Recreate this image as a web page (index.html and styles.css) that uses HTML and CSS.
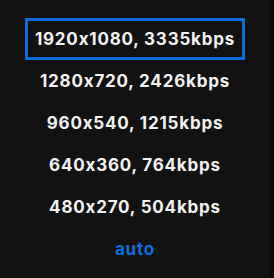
FILE: index.html
```html
<!DOCTYPE html>
<html>
<head>
<meta charset="utf-8">
<link rel="stylesheet" href="styles.css">
</head>
<body>
<div class="panel">
  <ul class="menu">
    <li class="item selected"><span class="label">1920x1080, 3335kbps</span></li>
    <li class="item"><span class="label">1280x720, 2426kbps</span></li>
    <li class="item"><span class="label">960x540, 1215kbps</span></li>
    <li class="item"><span class="label">640x360, 764kbps</span></li>
    <li class="item"><span class="label">480x270, 504kbps</span></li>
    <li class="item auto"><span class="label">auto</span></li>
  </ul>
</div>
</body>
</html>
```
FILE: styles.css
```css
html, body {
  margin: 0;
  padding: 0;
  background: #0a0a0a;
  height: 100%;
}
.panel {
  width: 270px;
  height: 278px;
  background: #121212;
  box-sizing: border-box;
  padding-top: 18px;
}
.menu {
  list-style: none;
  margin: 0;
  padding: 0;
  display: flex;
  flex-direction: column;
  align-items: center;
}
.item {
  height: 42px;
  display: flex;
  align-items: center;
  justify-content: center;
  font-family: Inter, "Liberation Sans", sans-serif;
  font-weight: 700;
  font-size: 17px;
  letter-spacing: 0.8px;
  font-feature-settings: "calt" 0;
  color: #f2f2f2;
}
.label {
  display: block;
  padding: 0 7px;
  border: 3px solid transparent;
  line-height: 36px;
}
.selected .label {
  border-color: #0a6fd8;
}
.auto {
  color: #0a6fd8;
}
```
